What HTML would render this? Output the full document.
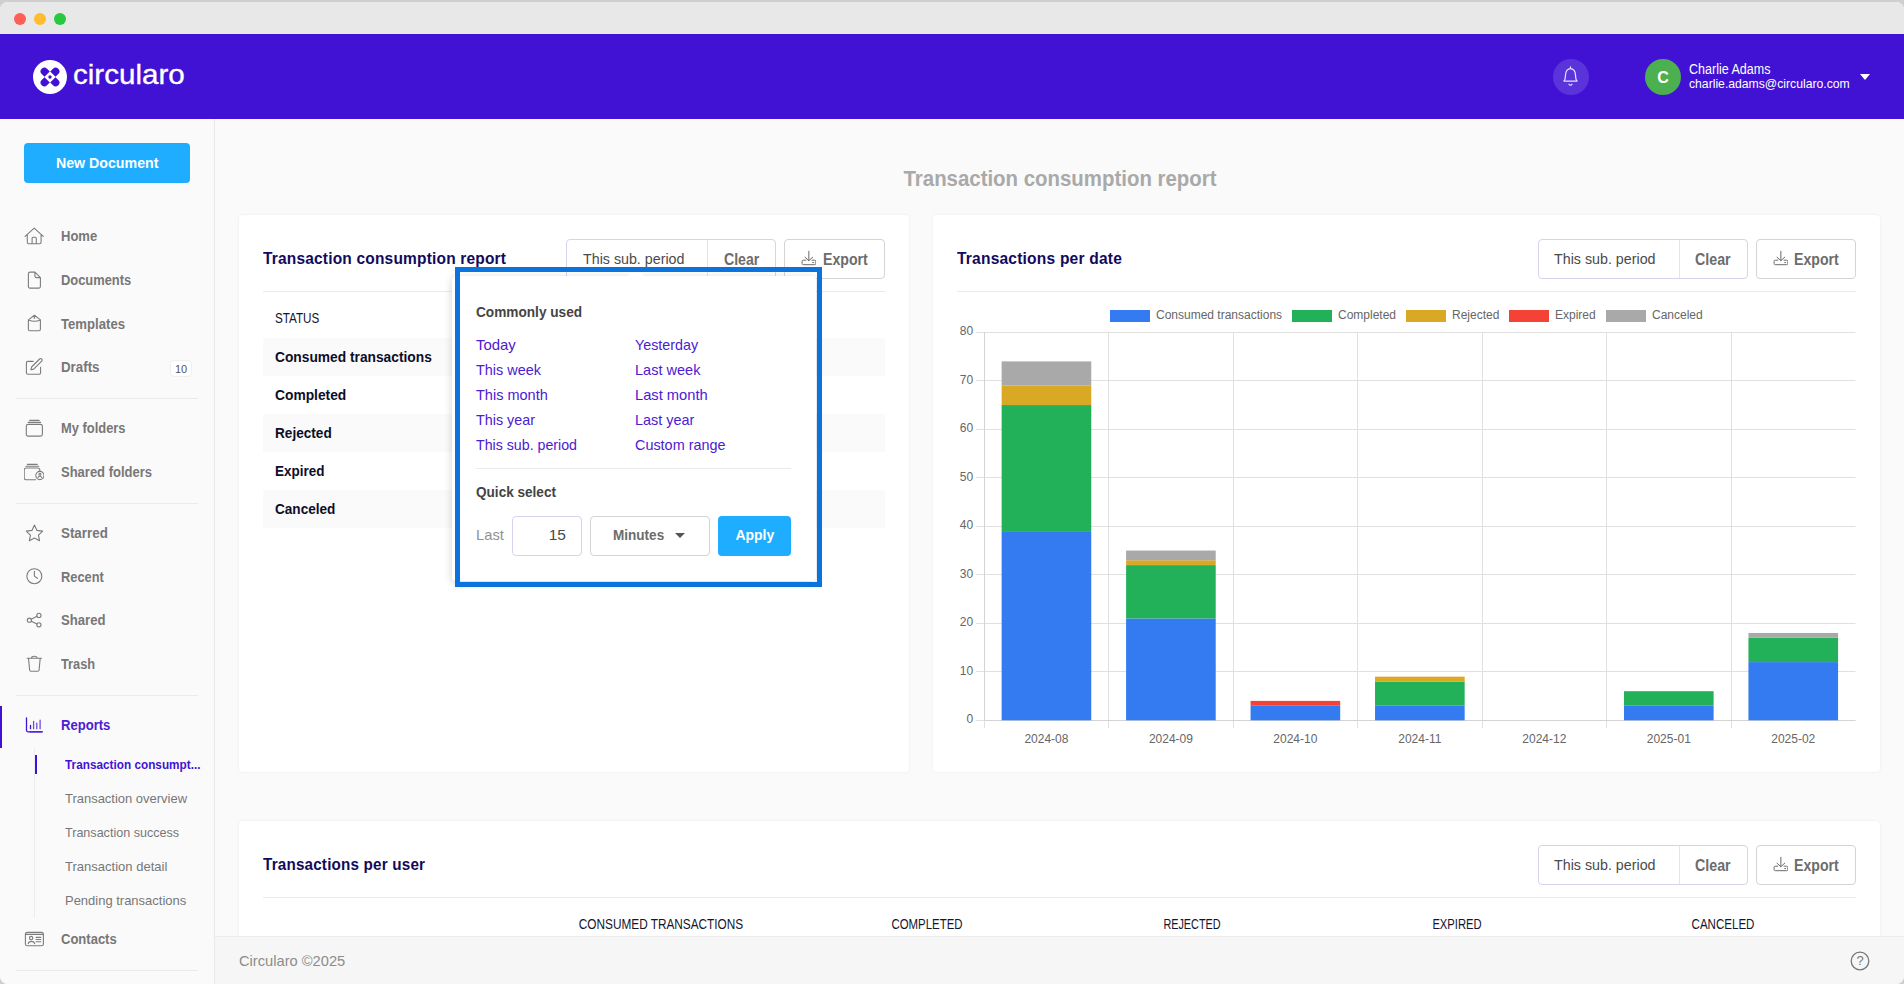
<!DOCTYPE html>
<html lang="en">
<head>
<meta charset="utf-8">
<title>Circularo - Transaction consumption report</title>
<style>
*{box-sizing:border-box;margin:0;padding:0}
html,body{width:1904px;height:984px;overflow:hidden}
html{background:#cfcfcf}
body{font-family:"Liberation Sans",sans-serif;background:#fafafa;color:#333;position:relative;clip-path:inset(2px 0 0 0 round 8px)}
.abs{position:absolute}
/* window chrome */
#chrome{left:0;top:0;width:1904px;height:34px;background:#e8e8e8}
.tl{width:12px;height:12px;border-radius:50%;top:13px}
/* header */
#hdr{left:0;top:34px;width:1904px;height:85px;background:#4112d4}
#logotxt{left:73.100px;top:58.400px;-webkit-text-stroke:.35px #fff;color:#fff;font-size:28.500px;line-height:32px;font-weight:400;white-space:nowrap}
#bell{left:1553px;top:59px;width:36px;height:36px;border-radius:50%;background:#5a33da}
#avatar{left:1645px;top:59px;width:36px;height:36px;border-radius:50%;background:#4caf50;color:#fff;font-weight:700;font-size:16px;line-height:37px;text-align:center}
.uname{left:1689px;color:#fff;font-size:13px;line-height:14px;white-space:nowrap}
/* sidebar */
#side{left:0;top:119px;width:215px;height:865px;background:#fafafa;border-right:1px solid #e9e9e9}
#newdoc{left:24px;top:143px;width:166px;height:40px;background:#1eadff;border-radius:4px;color:#fff;font-weight:700;font-size:15px;line-height:40px;text-align:center}
.nav{left:61px;color:#777;font-weight:700;font-size:14px;line-height:18px;white-space:nowrap}
.sub{left:65px;color:#777;font-size:13px;line-height:16px;white-space:nowrap}
.hr{height:1px;background:#eaeaea}
.ico{left:24px;width:20px;height:20px}
.ico svg{width:20px;height:20px;display:block;fill:none;stroke:#7c7c7c;stroke-width:1.1;stroke-linecap:round;stroke-linejoin:round}
/* cards */
.card{background:#fff;border-radius:4px;box-shadow:0 0 3px rgba(0,0,0,.07)}
.ctitle{color:#120a5c;font-weight:700;font-size:16px;line-height:20px;white-space:nowrap;letter-spacing:.2px}
.btn{height:40px;border:1px solid #d4d4d4;border-radius:4px;background:#fff;color:#555;font-size:16px;line-height:38px;white-space:nowrap}
.grp{border-color:#d6d3ee}
.th{color:#14142e;font-size:14px;line-height:16px;white-space:nowrap}
.td{color:#0d0d28;font-weight:700;font-size:15px;line-height:18px;white-space:nowrap}
.stripe{background:#fafafa;height:38px}
.lnk{color:#4b20d2;font-size:15px;line-height:18px;white-space:nowrap}
.ph{color:#444;font-weight:700;font-size:15px;line-height:18px;white-space:nowrap}
.bt{color:#4a4a4a;font-size:15.500px;line-height:20px;white-space:nowrap}
.bt.b{font-weight:700;color:#6c6c6c;font-size:16.500px;margin-top:-.3px}
.dl{fill:none;stroke:#6a6a6a;stroke-width:1;stroke-linecap:round;stroke-linejoin:round}
.th.c{text-align:center}
</style>
</head>
<body>
<!-- window chrome -->
<div id="chrome" class="abs"></div>
<div class="abs tl" style="left:14px;background:#ff5f57"></div>
<div class="abs tl" style="left:34px;background:#febc2e"></div>
<div class="abs tl" style="left:54px;background:#28c840"></div>

<!-- header -->
<div id="hdr" class="abs"></div>
<svg class="abs" style="left:32.800px;top:59.800px" width="34" height="34" viewBox="-17 -17 34 34">
  <circle cx="0" cy="0" r="17" fill="#fff"/>
  <g fill="#4112d4">
    <path d="M-.2-5.500-5.500-.2-8.300-3Q-10.900-5.600-8.300-8.300-5.600-10.900-3-8.300Z"/>
    <path d="M-.2-5.500-5.500-.2-8.300-3Q-10.900-5.600-8.300-8.300-5.600-10.900-3-8.300Z" transform="scale(-1 1)"/>
    <path d="M-.2-5.500-5.500-.2-8.300-3Q-10.900-5.600-8.300-8.300-5.600-10.900-3-8.300Z" transform="scale(1 -1)"/>
    <path d="M-.2-5.500-5.500-.2-8.300-3Q-10.900-5.600-8.300-8.300-5.600-10.900-3-8.300Z" transform="scale(-1 -1)"/>
    <circle cx="0" cy="0" r="1.700"/>
  </g>
</svg>
<div id="logotxt" class="abs" style="transform:scaleX(1.038);transform-origin:0 50%">circularo</div>
<div id="bell" class="abs"></div>
<svg class="abs" style="left:1557.750px;top:64.200px" width="25" height="25" viewBox="0 0 20 20" fill="none" stroke="#e6e0ff" stroke-width="1" stroke-linecap="round" stroke-linejoin="round">
  <path d="M10 2.2v1.2M4.8 13.6c.9-1 1.2-2.300 1.200-4.600 0-3 1.700-5.400 4-5.400s4 2.400 4 5.400c0 2.300.3 3.600 1.200 4.600z"/>
  <path d="M8.800 16.200c.3.500.7.700 1.200.700s.9-.2 1.200-.7"/>
</svg>
<div id="avatar" class="abs">C</div>
<div class="abs uname" style="transform:scaleX(0.894);transform-origin:0 50%;top:61.400px;font-size:14px;line-height:16px">Charlie Adams</div>
<div class="abs uname" style="transform:scaleX(0.9375);transform-origin:0 50%;top:76.500px">charlie.adams@circularo.com</div>
<div class="abs" style="left:1860px;top:74px;width:0;height:0;border-left:5px solid transparent;border-right:5px solid transparent;border-top:6px solid #fff"></div>

<!-- sidebar -->
<div id="side" class="abs"></div>
<div id="newdoc" class="abs"><span class="sc-c" style="transform:scaleX(0.9459);transform-origin:center;display:inline-block">New Document</span></div>
<div class="abs ico" style="top:226px"><svg viewBox="0 0 20 20"><path d="M1.100 10.400 10.200 2.100l9.100 8.300M3.300 8.500v7.800a1.500 1.500 0 0 0 1.500 1.500h10.800a1.500 1.500 0 0 0 1.500-1.500V8.500M8.100 17.800v-5.500a1 1 0 0 1 1-1h2.200a1 1 0 0 1 1 1v5.500"/></svg></div>
<div class="abs nav" style="transform:scaleX(0.9304);transform-origin:0 50%;top:227px">Home</div>
<div class="abs ico" style="top:270px"><svg viewBox="0 0 20 20"><path d="M5.900 2.100h5l5.500 5.500v9a1.500 1.500 0 0 1-1.500 1.500H5.900a1.500 1.500 0 0 1-1.500-1.500V3.600a1.500 1.500 0 0 1 1.500-1.500zM10.900 2.100v4a1.500 1.500 0 0 0 1.500 1.500h4"/></svg></div>
<div class="abs nav" style="transform:scaleX(0.9208);transform-origin:0 50%;top:271px">Documents</div>
<div class="abs ico" style="top:314px"><svg viewBox="0 0 20 20"><path d="M4.400 5.900 10.400 1.300l6 4.600M4.400 5.900q6 2.600 12 0v9.400a1.500 1.500 0 0 1-1.500 1.500H5.900a1.500 1.500 0 0 1-1.500-1.500z"/><circle cx="10.400" cy="3.900" r=".3"/></svg></div>
<div class="abs nav" style="transform:scaleX(0.9382);transform-origin:0 50%;top:315px">Templates</div>
<div class="abs ico" style="top:357px"><svg viewBox="0 0 20 20"><path d="M9.200 4.400H3.900a1.500 1.500 0 0 0-1.500 1.500v9.900a1.500 1.500 0 0 0 1.500 1.500h11.200a1.500 1.500 0 0 0 1.500-1.500v-5.600M6.900 12.800l.7-2.800 8-8a1.450 1.450 0 0 1 2.100 2.100l-8 8z"/></svg></div>
<div class="abs nav" style="transform:scaleX(0.9514);transform-origin:0 50%;top:358px">Drafts</div>
<div class="abs" style="left:170px;top:360px;width:22px;height:17px;background:#fff;border:1px solid #efefef;border-radius:4px;color:#555;font-size:11px;line-height:16px;text-align:center">10</div>
<div class="abs hr" style="left:16px;top:398px;width:182px"></div>

<div class="abs ico" style="top:418px"><svg viewBox="0 0 20 20"><path d="M5.700 2.400h9.400M4.200 4.400h12.400"/><rect x="2.300" y="6.400" width="16.100" height="11.700" rx="1.900"/></svg></div>
<div class="abs nav" style="transform:scaleX(0.9212);transform-origin:0 50%;top:419px">My folders</div>
<div class="abs ico" style="top:462px"><svg viewBox="0 0 20 20"><path d="M3.400 2.400h9.800M1.900 4.300h12.800M11.700 17.700H2a1.800 1.800 0 0 1-1.800-1.800V7.800A1.800 1.800 0 0 1 2 6h12a1.800 1.800 0 0 1 1.800 1.800v1.300"/><circle cx="15.900" cy="13.500" r="4.100"/><circle cx="15.900" cy="12.300" r="1"/><path d="M13.900 15.700c.3-1 1.100-1.400 2-1.400s1.700.4 2 1.400"/></svg></div>
<div class="abs nav" style="transform:scaleX(0.9283);transform-origin:0 50%;top:463px">Shared folders</div>
<div class="abs hr" style="left:16px;top:503px;width:182px"></div>

<div class="abs ico" style="top:523px"><svg viewBox="0 0 20 20"><path transform="translate(.45 .1)" d="M10 2l2.500 5.300 5.700.7-4.200 4 1.100 5.700L10 14.900 4.900 17.700 6 12 1.800 8l5.700-.7z"/></svg></div>
<div class="abs nav" style="transform:scaleX(0.9545);transform-origin:0 50%;top:524px">Starred</div>
<div class="abs ico" style="top:567px"><svg viewBox="0 0 20 20"><circle cx="10.350" cy="9.200" r="7.500"/><path d="M10.400 4.200v4.900l3 2.200"/></svg></div>
<div class="abs nav" style="transform:scaleX(0.9167);transform-origin:0 50%;top:568px">Recent</div>
<div class="abs ico" style="top:610px"><svg viewBox="0 0 20 20"><circle cx="5.400" cy="10.200" r="2.100"/><circle cx="14.900" cy="5.400" r="2.100"/><circle cx="14.900" cy="14.800" r="2.100"/><path d="M7.300 9.200l5.700-2.900M7.300 11.200l5.700 2.700"/></svg></div>
<div class="abs nav" style="transform:scaleX(0.9375);transform-origin:0 50%;top:611px">Shared</div>
<div class="abs ico" style="top:654px"><svg viewBox="0 0 20 20"><path d="M3.200 4.300h14.300M7.500 4.300c0-1.300.8-2 2.850-2s2.850.7 2.850 2M4.500 4.300l1.100 11.700a1.400 1.400 0 0 0 1.400 1.300h6.700a1.400 1.400 0 0 0 1.400-1.300L16.200 4.300"/></svg></div>
<div class="abs nav" style="transform:scaleX(0.9154);transform-origin:0 50%;top:655px">Trash</div>
<div class="abs hr" style="left:16px;top:695px;width:182px"></div>

<div class="abs" style="left:0;top:706px;width:2px;height:42px;background:#4112d4"></div>
<div class="abs ico" style="top:715px"><svg viewBox="0 0 20 20" style="stroke:#4112d4;stroke-width:1.300"><path d="M2.500 3v12.300a1.500 1.500 0 0 0 1.500 1.500h14.200M6.500 13.700v-3.400"/><path d="M9.600 13.700V6.300M12.800 13.700V8.200M16.100 13.700V5.100M6 16.800h12.200" opacity=".75"/></svg></div>
<div class="abs nav" style="transform:scaleX(0.9337);transform-origin:0 50%;top:716px;color:#4b20d2">Reports</div>
<div class="abs" style="left:34px;top:748px;width:1px;height:170px;background:#ececec"></div>
<div class="abs" style="left:35px;top:755px;width:2px;height:19px;background:#4112d4"></div>
<div class="abs sub" style="transform:scaleX(0.9062);transform-origin:0 50%;top:756.700px;color:#4112d4;font-weight:700">Transaction consumpt...</div>
<div class="abs sub" style="transform:scaleX(0.9971);transform-origin:0 50%;top:790.600px">Transaction overview</div>
<div class="abs sub" style="transform:scaleX(0.966);transform-origin:0 50%;top:824.600px">Transaction success</div>
<div class="abs sub" style="transform:scaleX(1.0016);transform-origin:0 50%;top:858.600px">Transaction detail</div>
<div class="abs sub" style="transform:scaleX(0.9982);transform-origin:0 50%;top:892.600px">Pending transactions</div>
<div class="abs ico" style="top:929px"><svg viewBox="0 0 20 20"><rect x="1.400" y="3.400" width="18" height="13.400" rx="1.900"/><path d="M1.400 5.400h18M12.100 8.400h4.700M12.100 10.500h4.700M12.100 12.700h4.700M4.200 14.600c.4-1.500 1.600-2.200 3.250-2.200s2.850.7 3.250 2.200"/><circle cx="7.100" cy="9.100" r="1.700"/></svg></div>
<div class="abs nav" style="transform:scaleX(0.9298);transform-origin:0 50%;top:930px">Contacts</div>
<div class="abs hr" style="left:16px;top:970px;width:182px"></div>


<!-- main -->
<div class="abs sc-c" id="ptitle" style="transform:scaleX(0.9278);transform-origin:center;left:860px;top:166px;width:400px;text-align:center;color:#a9a9a9;font-weight:700;font-size:22px;line-height:25px;white-space:nowrap">Transaction consumption report</div>

<!-- card 1 -->
<div class="abs card" style="left:239px;top:215px;width:670px;height:557px"></div>
<div class="abs ctitle" style="transform:scaleX(0.9675);transform-origin:0 50%;left:263px;top:249px">Transaction consumption report</div>
<div class="abs btn grp" style="left:566px;top:239px;width:210px"></div>
<div class="abs" style="left:707px;top:240px;width:1px;height:38px;background:#e4e2f3"></div>
<div class="abs bt" style="transform:scaleX(0.9195);transform-origin:0 50%;left:583.400px;top:249px">This sub. period</div>
<div class="abs bt b" style="transform:scaleX(0.8551);transform-origin:0 50%;left:723.600px;top:249px">Clear</div>
<div class="abs btn" style="left:784px;top:239px;width:101px"></div>
<svg class="abs dl" style="left:799.500px;top:250px" width="16" height="16" viewBox="0 0 16 16"><path d="M8.850 1.300v9.200M5 7.200l3.850 3.500 3.850-3.500M5.800 10.200H3.300a1.200 1.200 0 0 0-1.200 1.200v2.100a1.200 1.200 0 0 0 1.200 1.200h11.300a1.200 1.200 0 0 0 1.200-1.200v-2.100a1.200 1.200 0 0 0-1.200-1.200H12M12.700 12.600h1"/></svg>
<div class="abs bt b" style="transform:scaleX(0.8572);transform-origin:0 50%;left:823px;top:249px">Export</div>
<div class="abs hr" style="left:263px;top:291px;width:622px"></div>
<div class="abs th" style="transform:scaleX(0.8334);transform-origin:0 50%;left:275px;top:310px">STATUS</div>
<div class="abs stripe" style="left:263px;top:338px;width:622px"></div>
<div class="abs td" style="transform:scaleX(0.9176);transform-origin:0 50%;left:275px;top:348px">Consumed transactions</div>
<div class="abs td" style="transform:scaleX(0.9198);transform-origin:0 50%;left:275px;top:386px">Completed</div>
<div class="abs stripe" style="left:263px;top:414px;width:622px"></div>
<div class="abs td" style="transform:scaleX(0.9067);transform-origin:0 50%;left:275px;top:424px">Rejected</div>
<div class="abs td" style="transform:scaleX(0.8977);transform-origin:0 50%;left:275px;top:462px">Expired</div>
<div class="abs stripe" style="left:263px;top:490px;width:622px"></div>
<div class="abs td" style="transform:scaleX(0.9055);transform-origin:0 50%;left:275px;top:500px">Canceled</div>

<!-- card 2 -->
<div class="abs card" style="left:933px;top:215px;width:947px;height:557px"></div>
<div class="abs ctitle" style="transform:scaleX(0.9729);transform-origin:0 50%;left:957px;top:249px">Transactions per date</div>
<div class="abs btn grp" style="left:1538px;top:239px;width:210px"></div>
<div class="abs" style="left:1679px;top:240px;width:1px;height:38px;background:#e4e2f3"></div>
<div class="abs bt" style="transform:scaleX(0.9204);transform-origin:0 50%;left:1554.300px;top:249px">This sub. period</div>
<div class="abs bt b" style="transform:scaleX(0.8624);transform-origin:0 50%;left:1694.700px;top:249px">Clear</div>
<div class="abs btn" style="left:1756px;top:239px;width:100px"></div>
<svg class="abs dl" style="left:1771.500px;top:250px" width="16" height="16" viewBox="0 0 16 16"><path d="M8.850 1.300v9.200M5 7.200l3.850 3.500 3.850-3.500M5.800 10.200H3.300a1.200 1.200 0 0 0-1.200 1.200v2.100a1.200 1.200 0 0 0 1.200 1.200h11.300a1.200 1.200 0 0 0 1.200-1.200v-2.100a1.200 1.200 0 0 0-1.200-1.200H12M12.700 12.600h1"/></svg>
<div class="abs bt b" style="transform:scaleX(0.8552);transform-origin:0 50%;left:1793.700px;top:249px">Export</div>
<div class="abs hr" style="left:957px;top:291px;width:899px"></div>
<!--CHART0--><svg class="abs" style="left:940px;top:296px" width="930" height="470" viewBox="0 0 930 470" font-family="Liberation Sans, sans-serif" font-size="12" fill="#666">
<path d="M36.2 424.5H915.5M36.2 375.5H915.5M36.2 327.5H915.5M36.2 278.5H915.5M36.2 230.5H915.5M36.2 181.5H915.5M36.2 133.5H915.5M36.2 84.5H915.5M36.2 36.5H915.5M44.5 36.3V432.3M168.5 36.3V432.3M293.5 36.3V432.3M417.5 36.3V432.3M542.5 36.3V432.3M666.5 36.3V432.3M791.5 36.3V432.3" stroke="#e0e0e0" stroke-width="1" fill="none"/>
<path d="M44.5 36V424.5H915.5" stroke="#d4d4d4" stroke-width="1" fill="none"/>
<rect x="61.63" y="235.15" width="89.62" height="189.15" fill="#347bf1"/>
<rect x="61.63" y="109.05" width="89.62" height="126.1" fill="#22b159"/>
<rect x="61.63" y="89.65" width="89.62" height="19.4" fill="#d9a824"/>
<rect x="61.63" y="65.4" width="89.62" height="24.25" fill="#a9a9a9"/>
<rect x="186.1" y="322.45" width="89.62" height="101.85" fill="#347bf1"/>
<rect x="186.1" y="269.1" width="89.62" height="53.35" fill="#22b159"/>
<rect x="186.1" y="264.25" width="89.62" height="4.85" fill="#d9a824"/>
<rect x="186.1" y="254.55" width="89.62" height="9.7" fill="#a9a9a9"/>
<rect x="310.57" y="409.75" width="89.62" height="14.55" fill="#347bf1"/>
<rect x="310.57" y="404.9" width="89.62" height="4.85" fill="#f44336"/>
<rect x="435.04" y="409.75" width="89.62" height="14.55" fill="#347bf1"/>
<rect x="435.04" y="385.5" width="89.62" height="24.25" fill="#22b159"/>
<rect x="435.04" y="380.65" width="89.62" height="4.85" fill="#d9a824"/>
<rect x="683.98" y="409.75" width="89.62" height="14.55" fill="#347bf1"/>
<rect x="683.98" y="395.2" width="89.62" height="14.55" fill="#22b159"/>
<rect x="808.45" y="366.1" width="89.62" height="58.2" fill="#347bf1"/>
<rect x="808.45" y="341.85" width="89.62" height="24.25" fill="#22b159"/>
<rect x="808.45" y="337.0" width="89.62" height="4.85" fill="#a9a9a9"/>
<text x="33.2" y="427.3" text-anchor="end">0</text>
<text x="33.2" y="378.8" text-anchor="end">10</text>
<text x="33.2" y="330.3" text-anchor="end">20</text>
<text x="33.2" y="281.8" text-anchor="end">30</text>
<text x="33.2" y="233.3" text-anchor="end">40</text>
<text x="33.2" y="184.8" text-anchor="end">50</text>
<text x="33.2" y="136.3" text-anchor="end">60</text>
<text x="33.2" y="87.8" text-anchor="end">70</text>
<text x="33.2" y="39.3" text-anchor="end">80</text>
<text x="106.44" y="446.5" text-anchor="middle">2024-08</text>
<text x="230.91" y="446.5" text-anchor="middle">2024-09</text>
<text x="355.38" y="446.5" text-anchor="middle">2024-10</text>
<text x="479.85" y="446.5" text-anchor="middle">2024-11</text>
<text x="604.32" y="446.5" text-anchor="middle">2024-12</text>
<text x="728.79" y="446.5" text-anchor="middle">2025-01</text>
<text x="853.26" y="446.5" text-anchor="middle">2025-02</text>
<rect x="170" y="14" width="40" height="12" fill="#347bf1"/>
<text x="216" y="23.3">Consumed transactions</text>
<rect x="352" y="14" width="40" height="12" fill="#22b159"/>
<text x="398" y="23.3">Completed</text>
<rect x="466" y="14" width="40" height="12" fill="#d9a824"/>
<text x="512" y="23.3">Rejected</text>
<rect x="569" y="14" width="40" height="12" fill="#f44336"/>
<text x="615" y="23.3">Expired</text>
<rect x="666" y="14" width="40" height="12" fill="#a9a9a9"/>
<text x="712" y="23.3">Canceled</text>
</svg><!--CHART1-->

<!-- card 3 -->
<div class="abs card" style="left:239px;top:821px;width:1641px;height:200px"></div>
<div class="abs ctitle" style="transform:scaleX(0.9513);transform-origin:0 50%;left:263px;top:855px">Transactions per user</div>
<div class="abs btn grp" style="left:1538px;top:845px;width:210px"></div>
<div class="abs" style="left:1679px;top:846px;width:1px;height:38px;background:#e4e2f3"></div>
<div class="abs bt" style="transform:scaleX(0.9204);transform-origin:0 50%;left:1554.300px;top:855px">This sub. period</div>
<div class="abs bt b" style="transform:scaleX(0.8624);transform-origin:0 50%;left:1694.700px;top:855px">Clear</div>
<div class="abs btn" style="left:1756px;top:845px;width:100px"></div>
<svg class="abs dl" style="left:1771.500px;top:856px" width="16" height="16" viewBox="0 0 16 16"><path d="M8.850 1.300v9.200M5 7.200l3.850 3.500 3.850-3.500M5.800 10.200H3.300a1.200 1.200 0 0 0-1.200 1.200v2.100a1.200 1.200 0 0 0 1.200 1.200h11.300a1.200 1.200 0 0 0 1.200-1.200v-2.100a1.200 1.200 0 0 0-1.200-1.200H12M12.700 12.600h1"/></svg>
<div class="abs bt b" style="transform:scaleX(0.8552);transform-origin:0 50%;left:1793.700px;top:855px">Export</div>
<div class="abs hr" style="left:263px;top:897px;width:1593px"></div>
<div class="abs th c" style="transform:scaleX(0.8431);transform-origin:center;left:561px;top:916px;width:200px">CONSUMED TRANSACTIONS</div>
<div class="abs th c" style="transform:scaleX(0.8149);transform-origin:center;left:827px;top:916px;width:200px">COMPLETED</div>
<div class="abs th c" style="transform:scaleX(0.774);transform-origin:center;left:1092px;top:916px;width:200px">REJECTED</div>
<div class="abs th c" style="transform:scaleX(0.8004);transform-origin:center;left:1357px;top:916px;width:200px">EXPIRED</div>
<div class="abs th c" style="transform:scaleX(0.8249);transform-origin:center;left:1623px;top:916px;width:200px">CANCELED</div>

<!-- footer -->
<div class="abs" style="left:215px;top:936px;width:1689px;height:48px;background:#f6f6f6;border-top:1px solid #ebebeb"></div>
<div class="abs" style="transform:scaleX(0.9778);transform-origin:0 50%;left:239px;top:952px;color:#8c8c8c;font-size:15px;line-height:18px;white-space:nowrap">Circularo ©2025</div>
<svg class="abs" style="left:1850px;top:951px" width="20" height="20" viewBox="0 0 20 20" fill="none" stroke="#777" stroke-width="1.300"><circle cx="10" cy="10" r="8.800"/></svg>
<div class="abs" style="left:1850px;top:951px;width:20px;height:20px;text-align:center;color:#777;font-size:13px;line-height:20px">?</div>

<!-- popup -->
<div class="abs" style="left:452px;top:275.500px;width:364px;height:305px;background:#fff;border-radius:4px;box-shadow:0 2px 8px rgba(0,0,0,.18)"></div>
<div class="abs" style="left:630px;top:270px;width:12px;height:12px;background:#fff;transform:rotate(45deg)"></div>
<div class="abs ph" style="transform:scaleX(0.9093);transform-origin:0 50%;left:476px;top:303px">Commonly used</div>
<div class="abs lnk" style="transform:scaleX(0.9942);transform-origin:0 50%;left:476px;top:336px">Today</div>
<div class="abs lnk" style="transform:scaleX(0.9536);transform-origin:0 50%;left:635px;top:336px">Yesterday</div>
<div class="abs lnk" style="transform:scaleX(0.961);transform-origin:0 50%;left:476px;top:361px">This week</div>
<div class="abs lnk" style="transform:scaleX(0.9682);transform-origin:0 50%;left:635px;top:361px">Last week</div>
<div class="abs lnk" style="transform:scaleX(0.9676);transform-origin:0 50%;left:476px;top:386px">This month</div>
<div class="abs lnk" style="transform:scaleX(0.9795);transform-origin:0 50%;left:635px;top:386px">Last month</div>
<div class="abs lnk" style="transform:scaleX(0.9564);transform-origin:0 50%;left:476px;top:411px">This year</div>
<div class="abs lnk" style="transform:scaleX(0.9627);transform-origin:0 50%;left:635px;top:411px">Last year</div>
<div class="abs lnk" style="transform:scaleX(0.9463);transform-origin:0 50%;left:476px;top:436px">This sub. period</div>
<div class="abs lnk" style="transform:scaleX(0.9605);transform-origin:0 50%;left:635px;top:436px">Custom range</div>
<div class="abs hr" style="left:476px;top:468px;width:315px"></div>
<div class="abs ph" style="transform:scaleX(0.9051);transform-origin:0 50%;left:476px;top:483px">Quick select</div>
<div class="abs" style="transform:scaleX(0.9838);transform-origin:0 50%;left:476px;top:526px;color:#929292;font-size:15px;line-height:18px">Last</div>
<div class="abs btn grp" style="left:512px;top:516px;width:70px"></div>
<div class="abs bt" style="left:512px;top:525px;width:54px;text-align:right">15</div>
<div class="abs btn" style="left:590px;top:516px;width:120px"></div>
<div class="abs bt b" style="transform:scaleX(0.9034);transform-origin:0 50%;left:613px;top:525px;font-size:15px">Minutes</div>
<div class="abs" style="left:675px;top:533px;width:0;height:0;border-left:5px solid transparent;border-right:5px solid transparent;border-top:5px solid #555"></div>
<div class="abs" style="left:718px;top:516px;width:73px;height:40px;background:#1eadff;border-radius:4px;color:#fff;font-weight:700;font-size:15px;line-height:38px;text-align:center"><span class="sc-c" style="transform:scaleX(0.9335);transform-origin:center;display:inline-block">Apply</span></div>
<!-- highlight -->
<div class="abs" style="left:455px;top:267px;width:367px;height:320px;border:5px solid #0a73dc"></div>


</body>
</html>
